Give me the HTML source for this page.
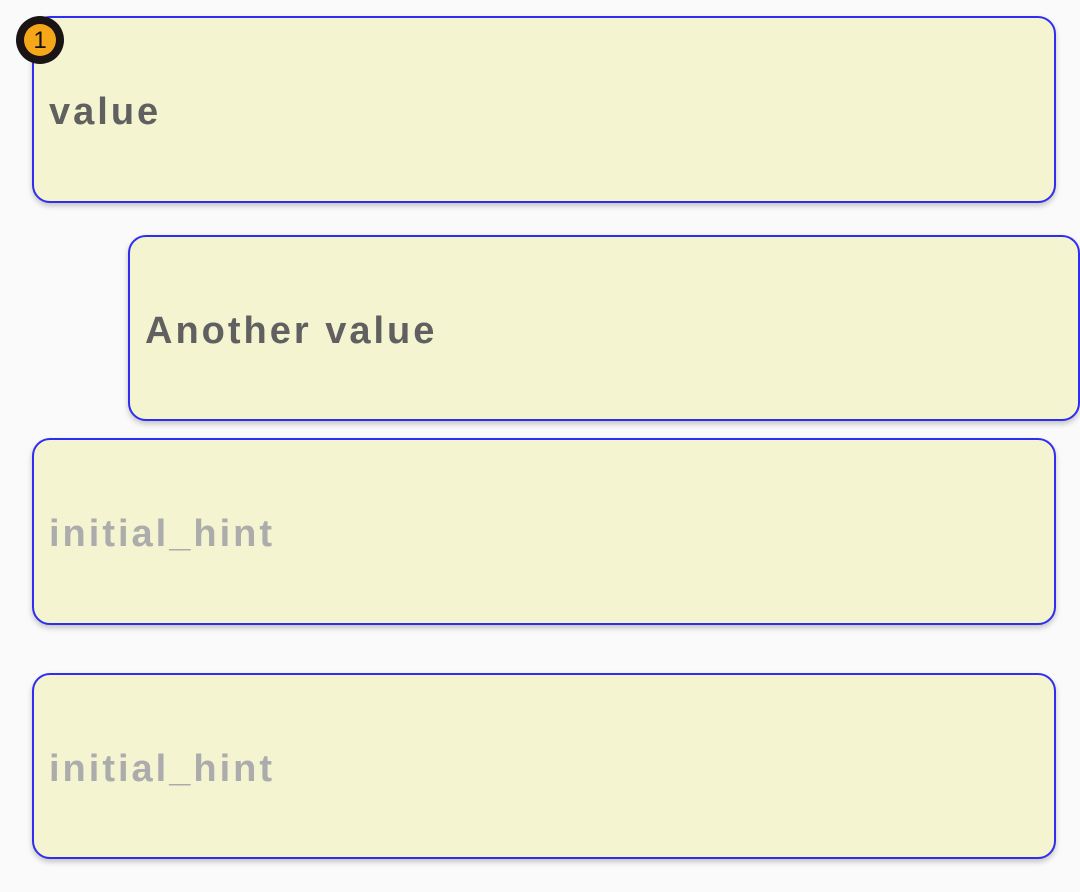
<!DOCTYPE html>
<html><head><style>
body{margin:0;width:1080px;height:892px;background:#fafafa;position:relative;overflow:hidden;font-family:"Liberation Sans",sans-serif}
.b{position:absolute;box-sizing:border-box;background:#f4f4d0;border:2px solid #2e2ef0;border-radius:18px;box-shadow:0 3px 6px rgba(0,0,0,.22)}
.t{position:absolute;left:15px;font-size:38px;font-weight:bold;letter-spacing:3px;color:#606060}
.h{color:#acacac}
.badge{position:absolute;left:16px;top:16px;width:48px;height:48px;border-radius:50%;background:#1a1414;box-sizing:border-box}
.badge div{position:absolute;left:8px;top:8px;width:32px;height:32px;border-radius:50%;background:#f6a619;text-align:center;line-height:33px;font-size:24px;color:#111}
</style></head><body>
<div class="b" style="left:32px;top:16px;width:1024px;height:187px"><div class="t" style="top:73px">value</div></div>
<div class="b" style="left:128px;top:235px;width:952px;height:186px"><div class="t" style="top:73px">Another value</div></div>
<div class="b" style="left:32px;top:438px;width:1024px;height:187px"><div class="t h" style="top:73px">initial_hint</div></div>
<div class="b" style="left:32px;top:673px;width:1024px;height:186px"><div class="t h" style="top:73px">initial_hint</div></div>
<div class="badge"><div>1</div></div>
</body></html>
